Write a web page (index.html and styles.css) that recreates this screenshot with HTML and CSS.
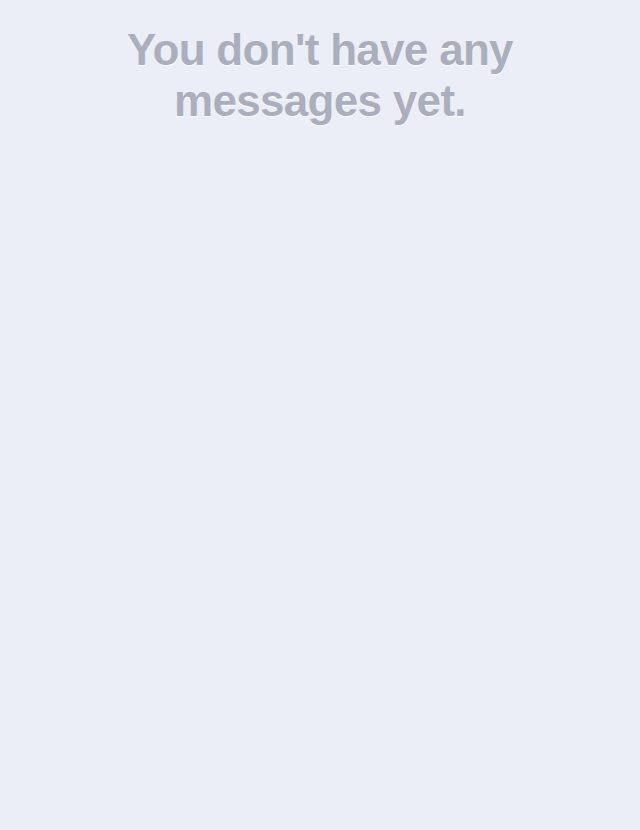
FILE: index.html
```html
<!DOCTYPE html>
<html>
<head>
<meta charset="utf-8">
<link rel="stylesheet" href="styles.css">
</head>
<body>
<div class="empty">
  <p class="empty-text">You don't have any<br>messages yet.</p>
</div>
</body>
</html>
```

FILE: styles.css
```css
html, body {
  margin: 0;
  padding: 0;
  height: 100%;
  background: #ebeef7;
}
.empty {
  padding-top: 24px;
  display: flex;
  justify-content: center;
}
.empty-text {
  margin: 0;
  font-family: "Liberation Sans", Arial, sans-serif;
  font-weight: bold;
  font-size: 44px;
  letter-spacing: -0.7px;
  line-height: 51px;
  color: #abaebd;
  text-align: center;
  text-shadow: 0 1px 0 #ffffff;
}
```
